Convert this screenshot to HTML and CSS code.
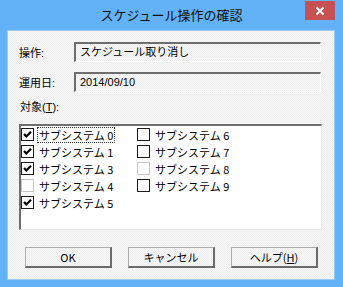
FILE: index.html
```html
<html>
    <head>
        <meta charset='utf-8'/>
        <title>スケジュール操作の確認</title>
        <link rel="stylesheet" href="styles.css">
    </head>
    <body>
        <div class="window">
            <div class="titlebar">
                <span></span>
                <div class="title">スケジュール操作の確認</div>
                <div class="close">
                    <svg width="10" height="10" viewBox="0 0 10 10"><path d="M1.5 1.5 L8.5 8.5 M8.5 1.5 L1.5 8.5" stroke="#fff" stroke-width="2" fill="none"/></svg>
                </div>
            </div>
            <div class="client">
                <div class="row">
                    <div class="label">操作:</div>
                    <div class="field">スケジュール取り消し</div>
                </div>
                <div class="row second">
                    <div class="label">運用日:</div>
                    <div class="field num">2014/09/10</div>
                </div>
                <div class="list_label">対象(<u>T</u>):</div>
                <div class="listbox">
                    <div class="item"><span class="cb on"><svg width="11" height="11" viewBox="0 0 11 11"><path d="M2 5 L4.3 7.5 L9 2.8" stroke="#000" stroke-width="2.2" fill="none"/></svg></span><span class="name focus">サブシステム 0</span></div>
                    <div class="item"><span class="cb on"><svg width="11" height="11" viewBox="0 0 11 11"><path d="M2 5 L4.3 7.5 L9 2.8" stroke="#000" stroke-width="2.2" fill="none"/></svg></span><span class="name">サブシステム 1</span></div>
                    <div class="item"><span class="cb on"><svg width="11" height="11" viewBox="0 0 11 11"><path d="M2 5 L4.3 7.5 L9 2.8" stroke="#000" stroke-width="2.2" fill="none"/></svg></span><span class="name">サブシステム 3</span></div>
                    <div class="item"><span class="cb dis"></span><span class="name">サブシステム 4</span></div>
                    <div class="item"><span class="cb on"><svg width="11" height="11" viewBox="0 0 11 11"><path d="M2 5 L4.3 7.5 L9 2.8" stroke="#000" stroke-width="2.2" fill="none"/></svg></span><span class="name">サブシステム 5</span></div>
                    <div class="item"><span class="cb"></span><span class="name">サブシステム 6</span></div>
                    <div class="item"><span class="cb"></span><span class="name">サブシステム 7</span></div>
                    <div class="item"><span class="cb dis"></span><span class="name">サブシステム 8</span></div>
                    <div class="item"><span class="cb"></span><span class="name">サブシステム 9</span></div>
                </div>
                <div class="buttons">
                    <div class="btn">OK</div>
                    <div class="btn">キャンセル</div>
                    <div class="btn">ヘルプ(<u>H</u>)</div>
                </div>
            </div>
        </div>
    </body>
</html>
```

FILE: styles.css
```css
body { margin: 0; font-family: "Liberation Sans", "Noto Sans CJK JP", sans-serif; font-size: 11px; color: #000; }
.window { width: 343px; height: 287px; background-color: #63b1f6; display: flex; flex-direction: column; box-sizing: border-box; }
.titlebar { height: 30px; display: grid; grid-template-columns: 1fr auto 1fr; align-items: start; }
.title { font-family: "Noto Sans CJK JP", sans-serif; font-size: 13px; line-height: 30px; color: #111; }
.close { justify-self: end; margin: 1px 8px 0 0; width: 30px; height: 19px; background-color: #c75050; display: flex; align-items: center; justify-content: center; }
.client { flex: 1; margin: 0 8px 7px 7px; box-sizing: border-box; border: 1px solid #9dcaf3; padding: 11px 13px 0 11px;
  background: repeating-conic-gradient(#ededed 0 25%, #f8f8f8 0 50%) 0 0 / 2px 2px; }
.row { display: flex; align-items: center; height: 20px; }
.row.second { margin-top: 10px; }
.label { width: 55px; }
.field { flex: 1; height: 20px; box-sizing: border-box; padding-left: 4px; line-height: 17px; border-top: 2px solid #6e6e6e; border-left: 2px solid #6e6e6e; border-right: 1px solid #fff; border-bottom: 1px solid #fff; }
.list_label { margin: 8px 0 0 1px; height: 14px; line-height: 14px; }
.list_label u, .btn u { text-decoration: underline; }
.listbox { margin-top: 10px; width: 303px; height: 106px; box-sizing: border-box; background: #fff; border-top: 2px solid #6e6e6e; border-left: 2px solid #6e6e6e; border-right: 1px solid #e8e8e8; border-bottom: 1px solid #e8e8e8;
  display: grid; grid-template-rows: repeat(5, 17px); grid-template-columns: 116px 116px; grid-auto-flow: column; align-content: start; }
.item { display: flex; align-items: center; gap: 3px; }
.cb { width: 13px; height: 13px; box-sizing: border-box; border: 1px solid #1c1c1c; background: #fff; display: flex; }
.cb.dis { border-color: #c8c8c8; }
.name { border: 1px dotted transparent; padding: 0 1px; line-height: 14px; font-family: "Noto Sans CJK JP", sans-serif; }
.name.focus { border-color: #333; }
.buttons { display: flex; gap: 16px; margin: 17px 0 0 6px; }
.btn { width: 87px; height: 21px; box-sizing: border-box; display: flex; align-items: center; justify-content: center; border-top: 1px solid #adadad; border-left: 1px solid #adadad; border-right: 2px solid #6a6a6a; border-bottom: 2px solid #6a6a6a; font-family: "Noto Sans CJK JP", sans-serif; }
```
